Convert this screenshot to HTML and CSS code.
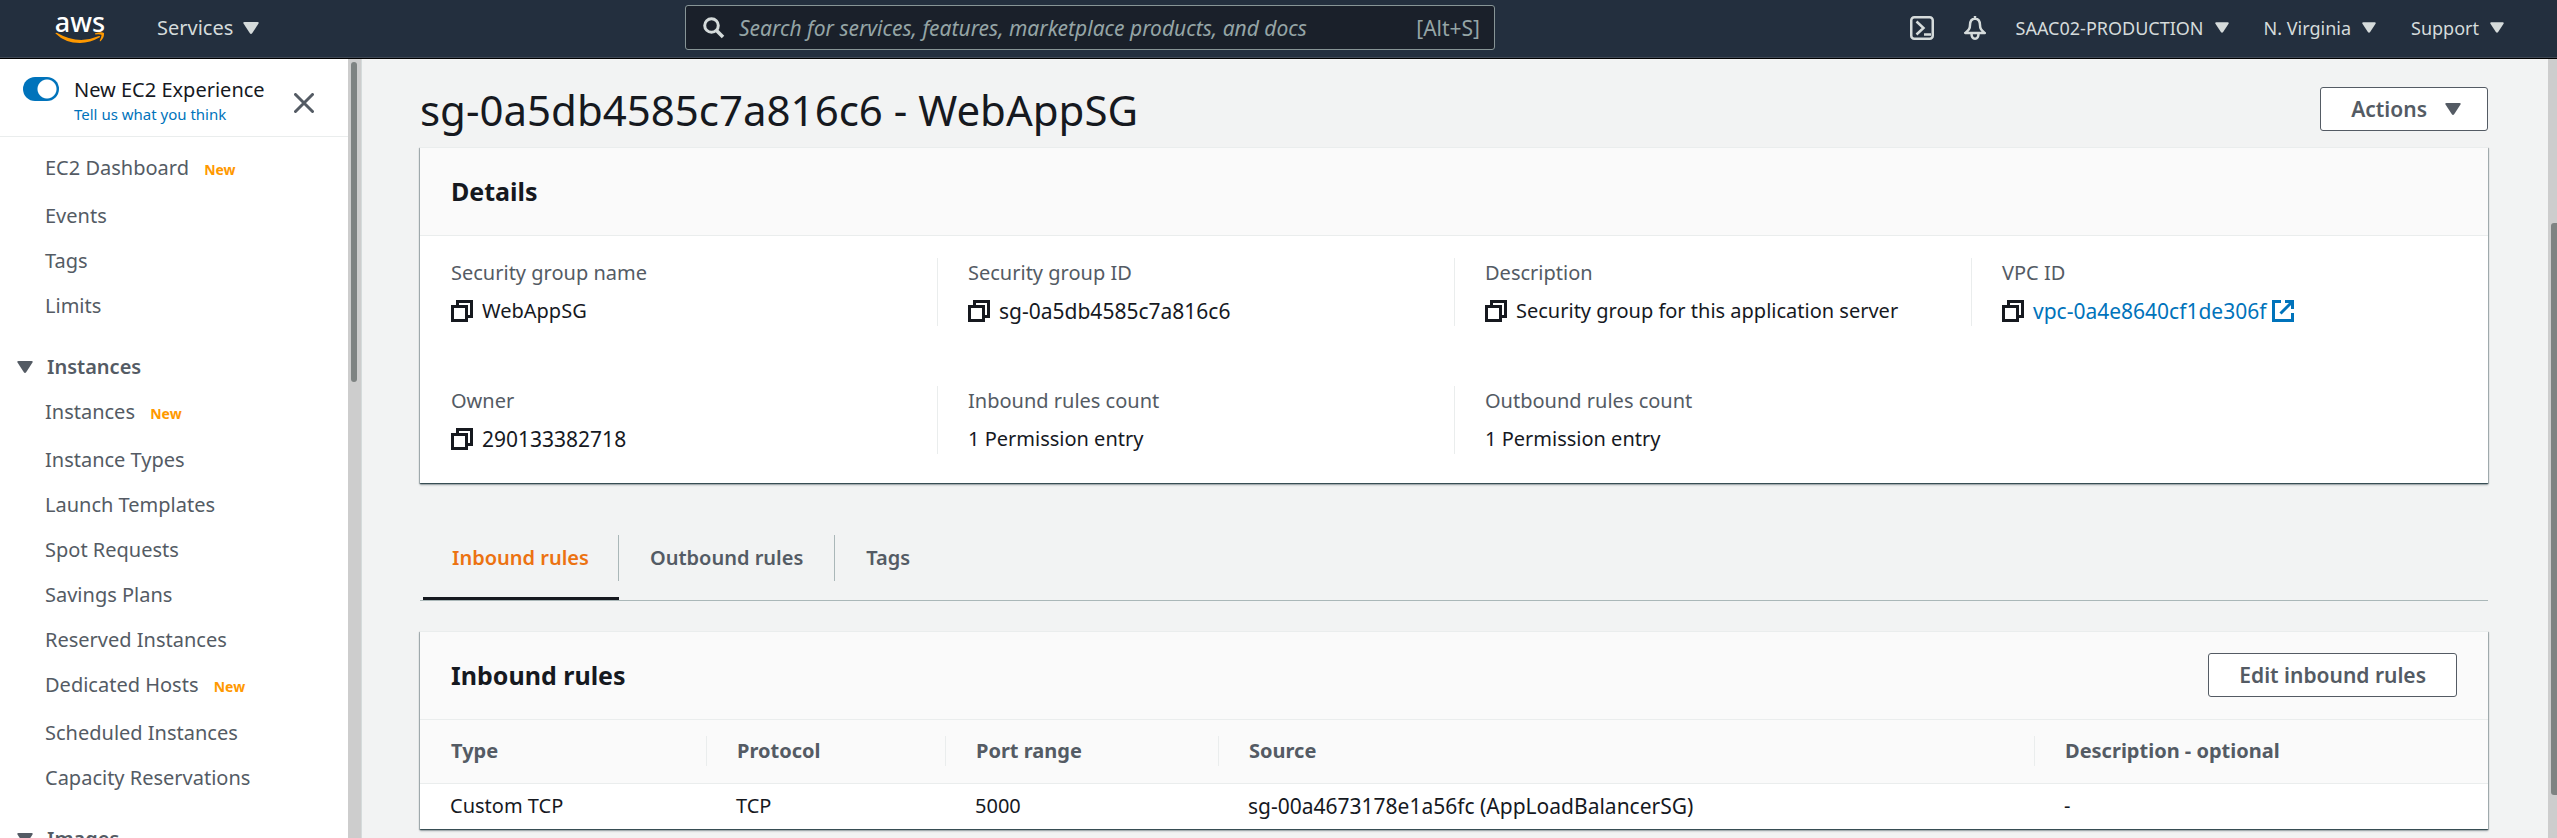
FILE: index.html
```html
<!DOCTYPE html>
<html lang="en">
<head>
<meta charset="utf-8">
<title>sg-0a5db4585c7a816c6 - WebAppSG</title>
<link rel="stylesheet" href="styles.css">
</head>
<body>
<svg class="defs" width="0" height="0" aria-hidden="true">
  <symbol id="caret" viewBox="0 0 16 12"><path d="M1.5 0h13q1.8 0 1 1.600L9.300 11q-1.300 1.800-2.600 0L.5 1.600Q-.3 0 1.500 0z" fill="currentColor"/></symbol>
  <symbol id="copy" viewBox="0 0 22 22"><path d="M6.500 6V1.500h14v15H17M1.500 6.500h14v14h-14z" fill="none" stroke="currentColor" stroke-width="3"/></symbol>
  <symbol id="external" viewBox="0 0 22 22"><path d="M9 1.500H1.500v19h19V13M13 1.500h7.500V9M20 2L8.500 13.500" fill="none" stroke="currentColor" stroke-width="3"/></symbol>
</svg>
<header class="topbar">
  <a class="logo" href="#" aria-label="AWS home">
    <span class="logo-word">aws</span>
    <svg class="logo-smile" viewBox="0 0 50 12" aria-hidden="true"><path d="M.3 1.200Q1 .3 2.200 1q21 12 41 3.300 1.800-.6 2 .8Q35 11 25 11 10 11 .3 1.200z" fill="#f90"/><path d="M40 1.200Q47-.8 49 1q.5 4.500-3.500 8.200-1 .3-.7-.7Q47 4 46.300 2.800 45 1.900 40.300 2.400z" fill="#f90"/></svg>
  </a>
  <button class="menu services" type="button">Services <svg class="caret" aria-hidden="true"><use href="#caret"/></svg></button>
  <label class="search">
    <svg class="search-icon" viewBox="0 0 22 22" aria-hidden="true"><circle cx="8.500" cy="8.500" r="6.800" fill="none" stroke="currentColor" stroke-width="3"/><path d="M13.500 13.500l6.500 6.500" stroke="currentColor" stroke-width="3.500"/></svg>
    <input class="search-input" type="text" aria-label="Search" placeholder="Search for services, features, marketplace products, and docs">
    <span class="search-hint">[Alt+S]</span>
  </label>
  <nav class="account">
    <button class="menu" type="button" aria-label="CloudShell"><svg class="tool" viewBox="0 0 24 24" aria-hidden="true"><rect x="1.250" y="1.250" width="21.500" height="21.500" rx="3" fill="none" stroke="currentColor" stroke-width="2.500"/><path d="M6.500 5.500l7 6.500-7 6.500M14 18.500h7" fill="none" stroke="currentColor" stroke-width="2.500"/></svg></button>
    <button class="menu" type="button" aria-label="Notifications"><svg class="tool" viewBox="0 0 24 24" aria-hidden="true"><path d="M12 2.500C8 3 7 6 7 9c0 4-1.500 5-4.800 8h19.600C18.500 14 17 13 17 9c0-3-1-6-5-6.500zM12 0v3M8.500 17.500c0 7 7 7 7 0" fill="none" stroke="currentColor" stroke-width="2.500" stroke-linejoin="round"/></svg></button>
    <button class="menu" type="button">SAAC02-PRODUCTION <svg class="caret small" aria-hidden="true"><use href="#caret"/></svg></button>
    <button class="menu" type="button">N. Virginia <svg class="caret small" aria-hidden="true"><use href="#caret"/></svg></button>
    <button class="menu" type="button">Support <svg class="caret small" aria-hidden="true"><use href="#caret"/></svg></button>
  </nav>
</header>
<div class="body">
  <aside class="sidebar">
    <div class="side-panel">
      <div class="side-head">
        <input class="toggle" id="exp" type="checkbox" role="switch" checked>
        <div class="exp">
          <label class="exp-title" for="exp">New EC2 Experience</label>
          <a class="exp-link" href="#">Tell us what you think</a>
        </div>
        <button class="close" type="button" aria-label="Close"><svg viewBox="0 0 20 20" width="20" height="20" aria-hidden="true"><path d="M1.500 1.500l17 17M18.500 1.500l-17 17" stroke="currentColor" stroke-width="3" stroke-linecap="round"/></svg></button>
      </div>
      <nav class="side-nav">
        <a class="tagged" href="#">EC2 Dashboard <b class="new">New</b></a>
        <a href="#">Events</a>
        <a href="#">Tags</a>
        <a href="#">Limits</a>
        <button class="group" type="button"><svg class="caret" aria-hidden="true"><use href="#caret"/></svg>Instances</button>
        <a class="tagged" href="#">Instances <b class="new">New</b></a>
        <a href="#">Instance Types</a>
        <a href="#">Launch Templates</a>
        <a href="#">Spot Requests</a>
        <a href="#">Savings Plans</a>
        <a href="#">Reserved Instances</a>
        <a class="tagged" href="#">Dedicated Hosts <b class="new">New</b></a>
        <a href="#">Scheduled Instances</a>
        <a href="#">Capacity Reservations</a>
        <button class="group" type="button"><svg class="caret" aria-hidden="true"><use href="#caret"/></svg>Images</button>
      </nav>
    </div>
    <div class="track side-track"><div class="thumb side-thumb"></div></div>
  </aside>
  <main class="main">
    <div class="title-row">
      <h1 class="title">sg-0a5db4585c7a816c6 - WebAppSG</h1>
      <button class="btn" type="button">Actions <svg class="caret" aria-hidden="true"><use href="#caret"/></svg></button>
    </div>
    <section class="card details">
      <div class="card-head"><h2>Details</h2></div>
      <dl class="facts">
        <div class="fact"><dt>Security group name</dt><dd><svg class="ico" aria-hidden="true"><use href="#copy"/></svg>WebAppSG</dd></div>
        <div class="fact"><dt>Security group ID</dt><dd class="id"><svg class="ico" aria-hidden="true"><use href="#copy"/></svg>sg-0a5db4585c7a816c6</dd></div>
        <div class="fact"><dt>Description</dt><dd><svg class="ico" aria-hidden="true"><use href="#copy"/></svg>Security group for this application server</dd></div>
        <div class="fact"><dt>VPC ID</dt><dd class="id"><svg class="ico" aria-hidden="true"><use href="#copy"/></svg><a class="vpc" href="#">vpc-0a4e8640cf1de306f<svg class="ico" aria-hidden="true"><use href="#external"/></svg></a></dd></div>
        <div class="fact"><dt>Owner</dt><dd class="id"><svg class="ico" aria-hidden="true"><use href="#copy"/></svg>290133382718</dd></div>
        <div class="fact"><dt>Inbound rules count</dt><dd>1 Permission entry</dd></div>
        <div class="fact"><dt>Outbound rules count</dt><dd>1 Permission entry</dd></div>
      </dl>
    </section>
    <div class="tabs" role="tablist">
      <button class="tab active" type="button" role="tab" aria-selected="true"><span>Inbound rules</span></button>
      <button class="tab" type="button" role="tab"><span>Outbound rules</span></button>
      <button class="tab" type="button" role="tab"><span>Tags</span></button>
    </div>
    <section class="card">
      <div class="card-head"><h2>Inbound rules</h2><button class="btn" type="button">Edit inbound rules</button></div>
      <table class="rules">
        <colgroup><col class="c1"><col class="c2"><col class="c3"><col class="c4"><col></colgroup>
        <thead><tr><th><span>Type</span></th><th><span>Protocol</span></th><th><span>Port range</span></th><th><span>Source</span></th><th><span>Description - optional</span></th></tr></thead>
        <tbody><tr><td>Custom TCP</td><td>TCP</td><td>5000</td><td class="id">sg-00a4673178e1a56fc (AppLoadBalancerSG)</td><td>-</td></tr></tbody>
      </table>
    </section>
  </main>
  <div class="track page-track"><div class="thumb page-thumb"></div></div>
</div>
</body>
</html>
```
FILE: styles.css
```css
* { box-sizing: border-box; }
body {
  margin: 0;
  height: 100vh;
  display: flex;
  flex-direction: column;
  overflow: hidden;
  background: #f2f3f3;
  color: #16191f;
  font: 20px/30px "Noto Sans", sans-serif;
}
button, input { font: inherit; }
button { cursor: pointer; }
a { text-decoration: none; color: inherit; }
.defs { position: absolute; }
.caret { width: 16px; height: 12px; flex: none; }
.caret.small { width: 14px; height: 11px; }
.id { font-size: 21px; }

.topbar {
  flex: none;
  height: 59px;
  display: grid;
  grid-template-columns: 157px 528fr 810px 1009fr;
  align-items: center;
  padding: 0 53px 3px 0;
  background: #232f3e;
  border-bottom: 1px solid #000;
  box-shadow: inset 0 -1px #3f4855;
  color: #d5dbdb;
}
.logo { display: flex; flex-direction: column; align-items: center; width: 50px; margin-left: 55px; }
.logo-word { color: #fff; font-size: 27px; font-weight: 500; line-height: 20px; }
.logo-smile { width: 50px; height: 12px; }
.menu {
  display: flex;
  align-items: center;
  gap: 11px;
  padding: 0;
  border: 0;
  background: none;
  color: inherit;
  white-space: nowrap;
}
.services { gap: 10px; justify-self: start; }
.search {
  display: flex;
  align-items: center;
  height: 45px;
  padding: 0 14px 0 17px;
  background: #1a202a;
  border: 1px solid #879596;
  border-radius: 3px;
  color: #95a5a6;
  font-size: 21px;
}
.search-icon { width: 22px; height: 22px; margin-right: 14px; color: #d5dbdb; }
.search-input { flex: 1; min-width: 0; padding: 0; border: 0; outline: 0; background: none; color: #fff; }
.search-input::placeholder { color: #95a5a6; font-style: italic; opacity: 1; }
.account { display: flex; align-items: center; justify-content: flex-end; gap: 35px; font-size: 18px; }
.account .menu:nth-child(-n+2) { margin-right: -6px; }
.tool { width: 24px; height: 24px; }

.body { flex: 1; min-height: 0; display: flex; }
.sidebar { flex: none; width: 362px; display: flex; border-right: 1px solid #d5dbdb; }
.side-panel { flex: 1; overflow: hidden; background: #fff; }
.side-head { display: flex; align-items: flex-start; height: 78px; padding: 14px 34px 0 23px; border-bottom: 1px solid #eaeded; }
.toggle {
  appearance: none;
  flex: none;
  width: 36px;
  height: 24px;
  margin: 4px 15px 0 0;
  border-radius: 12px;
  background: radial-gradient(circle at 24px 12px, #fff 9px, #0073bb 10px);
}
.exp { flex: 1; display: flex; flex-direction: column; }
.exp-title { line-height: 34px; white-space: nowrap; }
.exp-link { color: #0073bb; font-size: 15px; line-height: 14px; }
.close { margin-top: 20px; padding: 0; border: 0; background: none; color: #545b64; line-height: 0; }
.side-nav { display: flex; flex-direction: column; padding-top: 8px; color: #545b64; }
.side-nav a { height: 45px; padding: 8px 0 0 45px; white-space: nowrap; }
.side-nav .tagged { height: 48px; }
.new { margin-left: 10px; color: #f90; font-size: 14px; }
.group {
  display: flex;
  align-items: center;
  gap: 14px;
  height: 61px;
  padding: 16px 0 0 17px;
  border: 0;
  background: none;
  color: #545b64;
  font-weight: 600;
}
.track { flex: none; background: #cdcdcd; }
.thumb { background: #7e8382; border-radius: 3px; }
.side-track { width: 13px; padding: 3px 4px 0 3px; }
.side-thumb { height: 320px; }
.page-track { width: 9px; padding: 164px 0 0 3px; }
.page-thumb { height: 572px; border-radius: 3px 0 0 3px; }

.main { flex: 1; min-width: 0; padding: 28px 60px 0 58px; }
.title-row { display: flex; justify-content: space-between; align-items: flex-start; height: 60px; }
.title { margin: 0; font-size: 42px; font-weight: 400; line-height: 46px; }
.btn {
  display: flex;
  align-items: center;
  gap: 18px;
  height: 44px;
  padding: 0 30px;
  border: 1px solid #545b64;
  border-radius: 3px;
  background: #fff;
  color: #545b64;
  font-size: 21px;
  font-weight: 600;
  white-space: nowrap;
}
.title-row .btn { padding-right: 26px; }
.card {
  background: #fff;
  border-top: 1px solid #eaeded;
  box-shadow: 0 1px 1px rgba(0, 28, 36, .5), 0 2px 2px rgba(0, 28, 36, .3), 1px 1px 1px rgba(0, 28, 36, .2), -1px 1px 1px rgba(0, 28, 36, .2);
}
.card-head {
  display: flex;
  align-items: center;
  justify-content: space-between;
  height: 88px;
  padding: 0 31px 2px;
  background: #fafafa;
  border-bottom: 1px solid #eaeded;
}
.card-head h2 { margin: 0; font-size: 25px; font-weight: 700; }
.facts { display: grid; grid-template-columns: repeat(4, 1fr); row-gap: 60px; margin: 0; padding: 22px 0 29px; }
.fact { display: flex; flex-direction: column; gap: 8px; padding-left: 31px; }
.fact:not(:nth-child(4n+1)) { box-shadow: inset 1px 0 #eaeded; }
.fact dt { color: #545b64; }
.fact dd { display: flex; align-items: center; gap: 9px; margin: 0; white-space: nowrap; }
.ico { width: 22px; height: 22px; flex: none; }
.vpc { display: flex; align-items: center; gap: 6px; color: #0073bb; }
.tabs { display: flex; margin-top: 44px; border-bottom: 1px solid #aab7b8; }
.tab { display: flex; height: 73px; padding: 8px 0 0; border: 0; background: none; color: #545b64; font-weight: 600; }
.tab span { height: 46px; padding: 8px 31px; border-right: 1px solid #aab7b8; }
.tab:last-child span { border: 0; }
.tab.active { margin-left: 3px; color: #ec7211; box-shadow: inset 0 -3px #16191f; }
.tab.active span { padding: 8px 29px; }
.tabs + .card { margin-top: 30px; }
.rules { width: 100%; table-layout: fixed; border-collapse: collapse; text-align: left; }
.rules th { height: 63px; padding: 0; background: #fafafa; border-bottom: 1px solid #eaeded; color: #545b64; font-weight: 700; }
.rules th span { display: block; padding-left: 31px; }
.rules th + th span { padding-left: 30px; border-left: 1px solid #eaeded; }
.rules td { height: 46px; padding: 0 0 0 30px; }
.c1 { width: 286px; }
.c2 { width: 239px; }
.c3 { width: 273px; }
.c4 { width: 816px; }
```
